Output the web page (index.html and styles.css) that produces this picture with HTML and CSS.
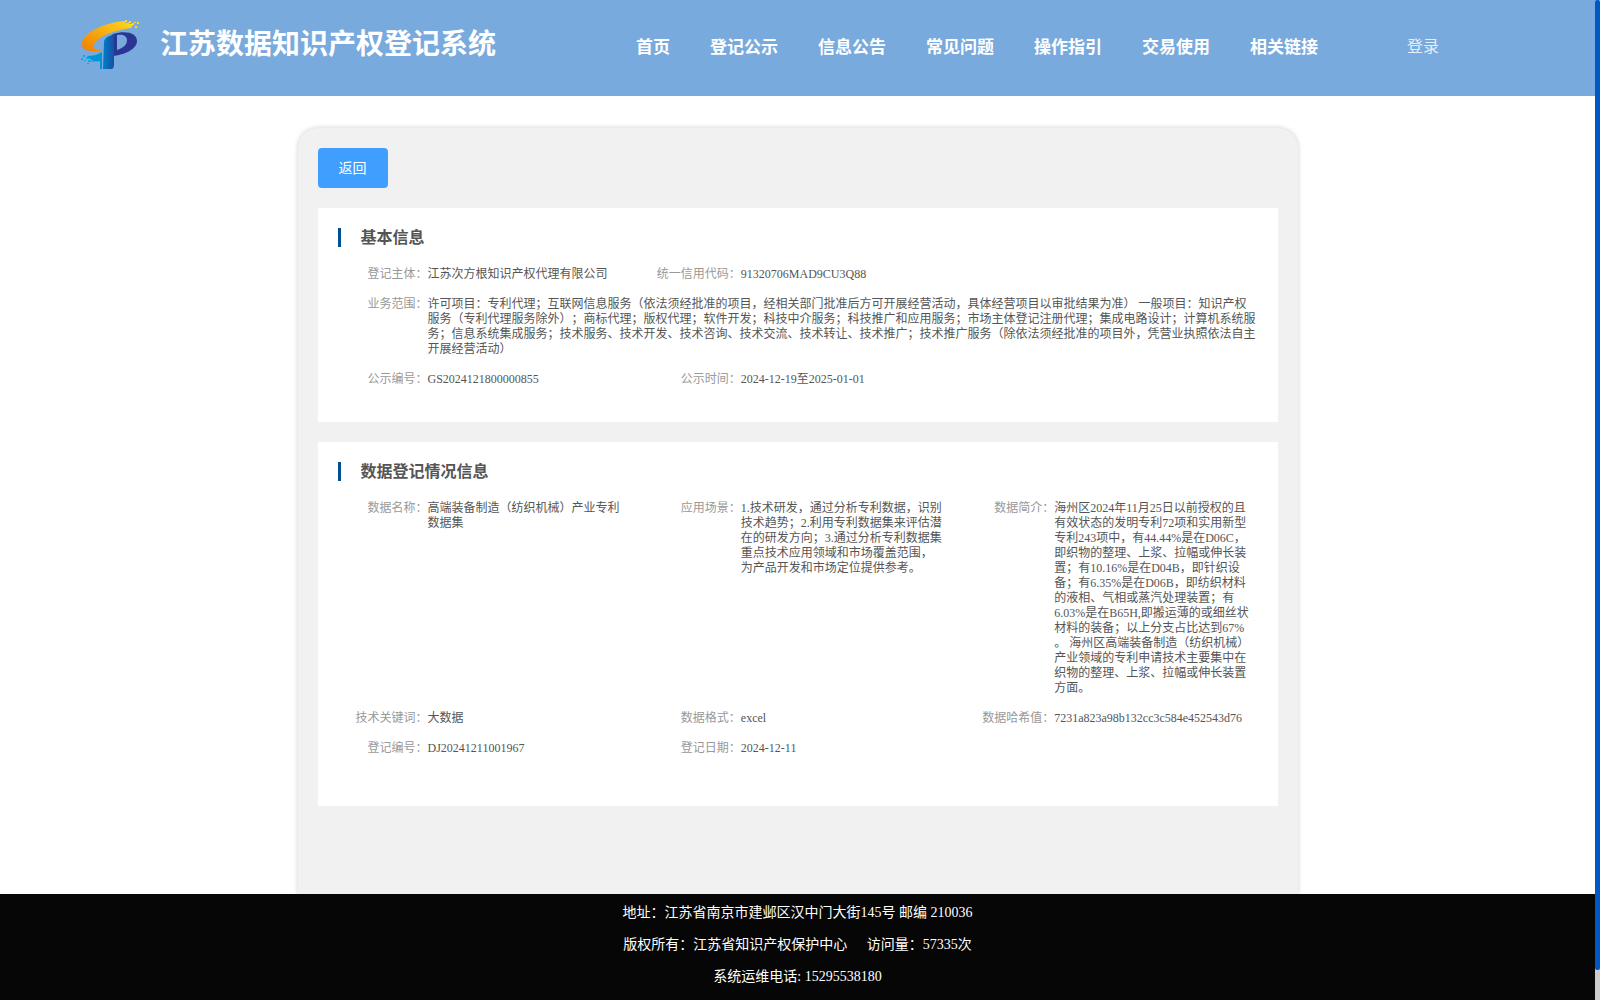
FILE: index.html
```html
<!DOCTYPE html>
<html lang="zh-CN">

<head>
    <meta charset="UTF-8">
    <meta name="viewport" content="width=device-width, initial-scale=1.0">
    <title>江苏数据知识产权登记系统</title>
    <link rel="stylesheet" href="styles.css">
</head>

<body>
    <header class="header">
        <svg class="logo" viewBox="0 0 70 62" aria-hidden="true">
            <defs>
                <linearGradient id="gold" x1="0" y1="1" x2="1" y2="0">
                    <stop offset="0" stop-color="#f07d00" />
                    <stop offset="1" stop-color="#ffd91e" />
                </linearGradient>
                <linearGradient id="stem" x1="0" y1="0" x2="1" y2="0">
                    <stop offset="0" stop-color="#0080c8" />
                    <stop offset="1" stop-color="#1c449c" />
                </linearGradient>
            </defs>
            <!-- 橙色弧 -->
            <path fill="url(#gold)" d="M48 7C27 9 6 19 6 30c0 6 6 8 18 7l1-1c-6 0-8-2-7-5 2-8 20-15 37-17l2-3-4-1 1-2-4 1z" />
            <path fill="#ffd91e" d="M49 6h2v2h-2zM53 7h2v2h-2zM58 8h2v1h-2zM61 8h2v2h-2zM56 9h2v2h-2zM59 12h2v2h-2zM53 10h3v2h-3z" />
            <!-- 字母 P -->
            <path fill="#2b3694" fill-rule="evenodd" d="M37 20c13-4 24-1 24 7 0 8-12 14-25 15V21zM41 21v15c6-2 10-5 10-10 0-4-4-6-10-5z" />
            <path fill="url(#stem)" d="M30 24c2-2 5-3 10-4-2 2-2 3-2 7v22c0 5-1 6-3 6h-8l1-27c0-2 1-3 2-4z" />
            <path fill="#0094d8" d="M26 27v28h-2v-8c-4 1-7 0-10-2l-3-3c6 0 10-1 15-4z" />
            <path fill="#13a5e2" d="M7 41h2v2H7zM5 44h2v2H5zM10 43h3v2h-3zM8 46h2v1H8zM12 46h3v2h-3zM11 49h2v1h-2zM16 47h2v1h-2z" />
        </svg>
        <h1 class="title">江苏数据知识产权登记系统</h1>
        <nav class="nav">
            <a href="#">首页</a>
            <a href="#">登记公示</a>
            <a href="#">信息公告</a>
            <a href="#">常见问题</a>
            <a href="#">操作指引</a>
            <a href="#">交易使用</a>
            <a href="#">相关链接</a>
        </nav>
        <a class="login" href="#">登录</a>
    </header>

    <main class="panel">
        <button type="button" class="back">返回</button>

        <section class="card">
            <h2>基本信息</h2>
            <dl class="info">
                <div>
                    <dt>登记主体：</dt>
                    <dd>江苏次方根知识产权代理有限公司</dd>
                </div>
                <div>
                    <dt>统一信用代码：</dt>
                    <dd>91320706MAD9CU3Q88</dd>
                </div>
                <div class="full">
                    <dt>业务范围：</dt>
                    <dd>许可项目：专利代理；互联网信息服务（依法须经批准的项目，经相关部门批准后方可开展经营活动，具体经营项目以审批结果为准） 一般项目：知识产权服务（专利代理服务除外）；商标代理；版权代理；软件开发；科技中介服务；科技推广和应用服务；市场主体登记注册代理；集成电路设计；计算机系统服务；信息系统集成服务；技术服务、技术开发、技术咨询、技术交流、技术转让、技术推广；技术推广服务（除依法须经批准的项目外，凭营业执照依法自主开展经营活动）</dd>
                </div>
                <div>
                    <dt>公示编号：</dt>
                    <dd>GS2024121800000855</dd>
                </div>
                <div>
                    <dt>公示时间：</dt>
                    <dd>2024-12-19至2025-01-01</dd>
                </div>
            </dl>
        </section>

        <section class="card card-data">
            <h2>数据登记情况信息</h2>
            <dl class="info">
                <div>
                    <dt>数据名称：</dt>
                    <dd>高端装备制造（纺织机械）产业专利数据集</dd>
                </div>
                <div>
                    <dt>应用场景：</dt>
                    <dd>1.技术研发，通过分析专利数据，识别技术趋势；2.利用专利数据集来评估潜在的研发方向；3.通过分析专利数据集重点技术应用领域和市场覆盖范围，为产品开发和市场定位提供参考。</dd>
                </div>
                <div>
                    <dt>数据简介：</dt>
                    <dd>海州区2024年11月25日以前授权的且有效状态的发明专利72项和实用新型专利243项中，有44.44%是在D06C，即织物的整理、上浆、拉幅或伸长装置；有10.16%是在D04B，即针织设备；有6.35%是在D06B，即纺织材料的液相、气相或蒸汽处理装置；有6.03%是在B65H,即搬运薄的或细丝状材料的装备；以上分支占比达到67% 。 海州区高端装备制造（纺织机械）产业领域的专利申请技术主要集中在织物的整理、上浆、拉幅或伸长装置方面。</dd>
                </div>
                <div>
                    <dt>技术关键词：</dt>
                    <dd>大数据</dd>
                </div>
                <div>
                    <dt>数据格式：</dt>
                    <dd>excel</dd>
                </div>
                <div>
                    <dt>数据哈希值：</dt>
                    <dd>7231a823a98b132cc3c584e452543d76</dd>
                </div>
                <div>
                    <dt>登记编号：</dt>
                    <dd>DJ20241211001967</dd>
                </div>
                <div>
                    <dt>登记日期：</dt>
                    <dd>2024-12-11</dd>
                </div>
            </dl>
        </section>
    </main>

    <footer class="footer">
        <p>地址：江苏省南京市建邺区汉中门大街145号 邮编 210036</p>
        <p>版权所有：江苏省知识产权保护中心 <span class="visits">访问量：57335次</span></p>
        <p>系统运维电话: 15295538180</p>
    </footer>

    <div class="scroll-track">
        <div class="scroll-thumb"></div>
    </div>
</body>

</html>
```

FILE: styles.css
```css
* {
    box-sizing: border-box;
    margin: 0;
    padding: 0;
}

body {
    display: flex;
    flex-direction: column;
    min-height: 100vh;
    padding-right: 5px;
    background: #fff;
    color: #555;
    font-family: "Liberation Serif", "Noto Sans CJK SC", serif;
    font-size: 12px;
    text-spacing-trim: space-all;
}

a {
    color: #fff;
    text-decoration: none;
}

/* 顶部导航 */
.header {
    display: flex;
    align-items: center;
    height: 96px;
    padding: 0 76px 6px;
    background: #79aadd;
    white-space: nowrap;
}

.logo {
    width: 70px;
    height: 62px;
    margin-right: 14px;
}

.title {
    color: #fff;
    font-size: 28px;
    line-height: 40px;
}

.nav {
    display: flex;
    gap: 40px;
    margin-left: 140px;
    font-size: 17px;
    font-weight: bold;
}

.login {
    margin-left: 89px;
    font-size: 16px;
    opacity: 0.8;
}

/* 内容区 */
.panel {
    flex: 1;
    width: 1000px;
    max-width: 100%;
    margin: 32px auto 0;
    padding: 20px;
    background: #f1f1f1;
    border-radius: 20px 20px 0 0;
    box-shadow: 0 0 5px rgba(0, 0, 0, 0.2);
}

.back {
    display: block;
    width: 70px;
    height: 40px;
    margin-bottom: 20px;
    padding-bottom: 2px;
    border: none;
    border-radius: 4px;
    background: #409eff;
    color: #fff;
    font-family: inherit;
    font-size: 14px;
    cursor: pointer;
}

.card {
    margin-bottom: 20px;
    padding: 20px 0 20px 20px;
    background: #fff;
}

.card-data {
    padding-bottom: 35px;
}

.card h2 {
    margin-bottom: 20px;
    padding-left: 20px;
    border-left: 3px solid #004f94;
    font-size: 16px;
    line-height: 19px;
}

.info {
    display: grid;
    grid-template-columns: repeat(3, 1fr);
    line-height: 15px;
}

.info div {
    display: flex;
    min-width: 0;
    margin-bottom: 15px;
    padding-right: 20px;
}

.info .full {
    grid-column: 1 / -1;
}

/* 第三列留空，换行开始 */
.info .full + div {
    grid-column: 1;
}

.info dt {
    flex: 0 0 90px;
    color: #999;
    text-align: right;
}

/* 底部 */
.footer {
    padding: 3px 0 7px;
    background: #060606;
    color: #fff;
    font-size: 14px;
    line-height: 32px;
    text-align: center;
}

.visits {
    margin-left: 16px;
}

/* 滚动条 */
.scroll-track {
    position: fixed;
    top: 0;
    right: 0;
    width: 5px;
    height: 100%;
    background: #ccc;
}

.scroll-thumb {
    height: 97%;
    border-radius: 2px;
    background: #0058c4;
}
```
